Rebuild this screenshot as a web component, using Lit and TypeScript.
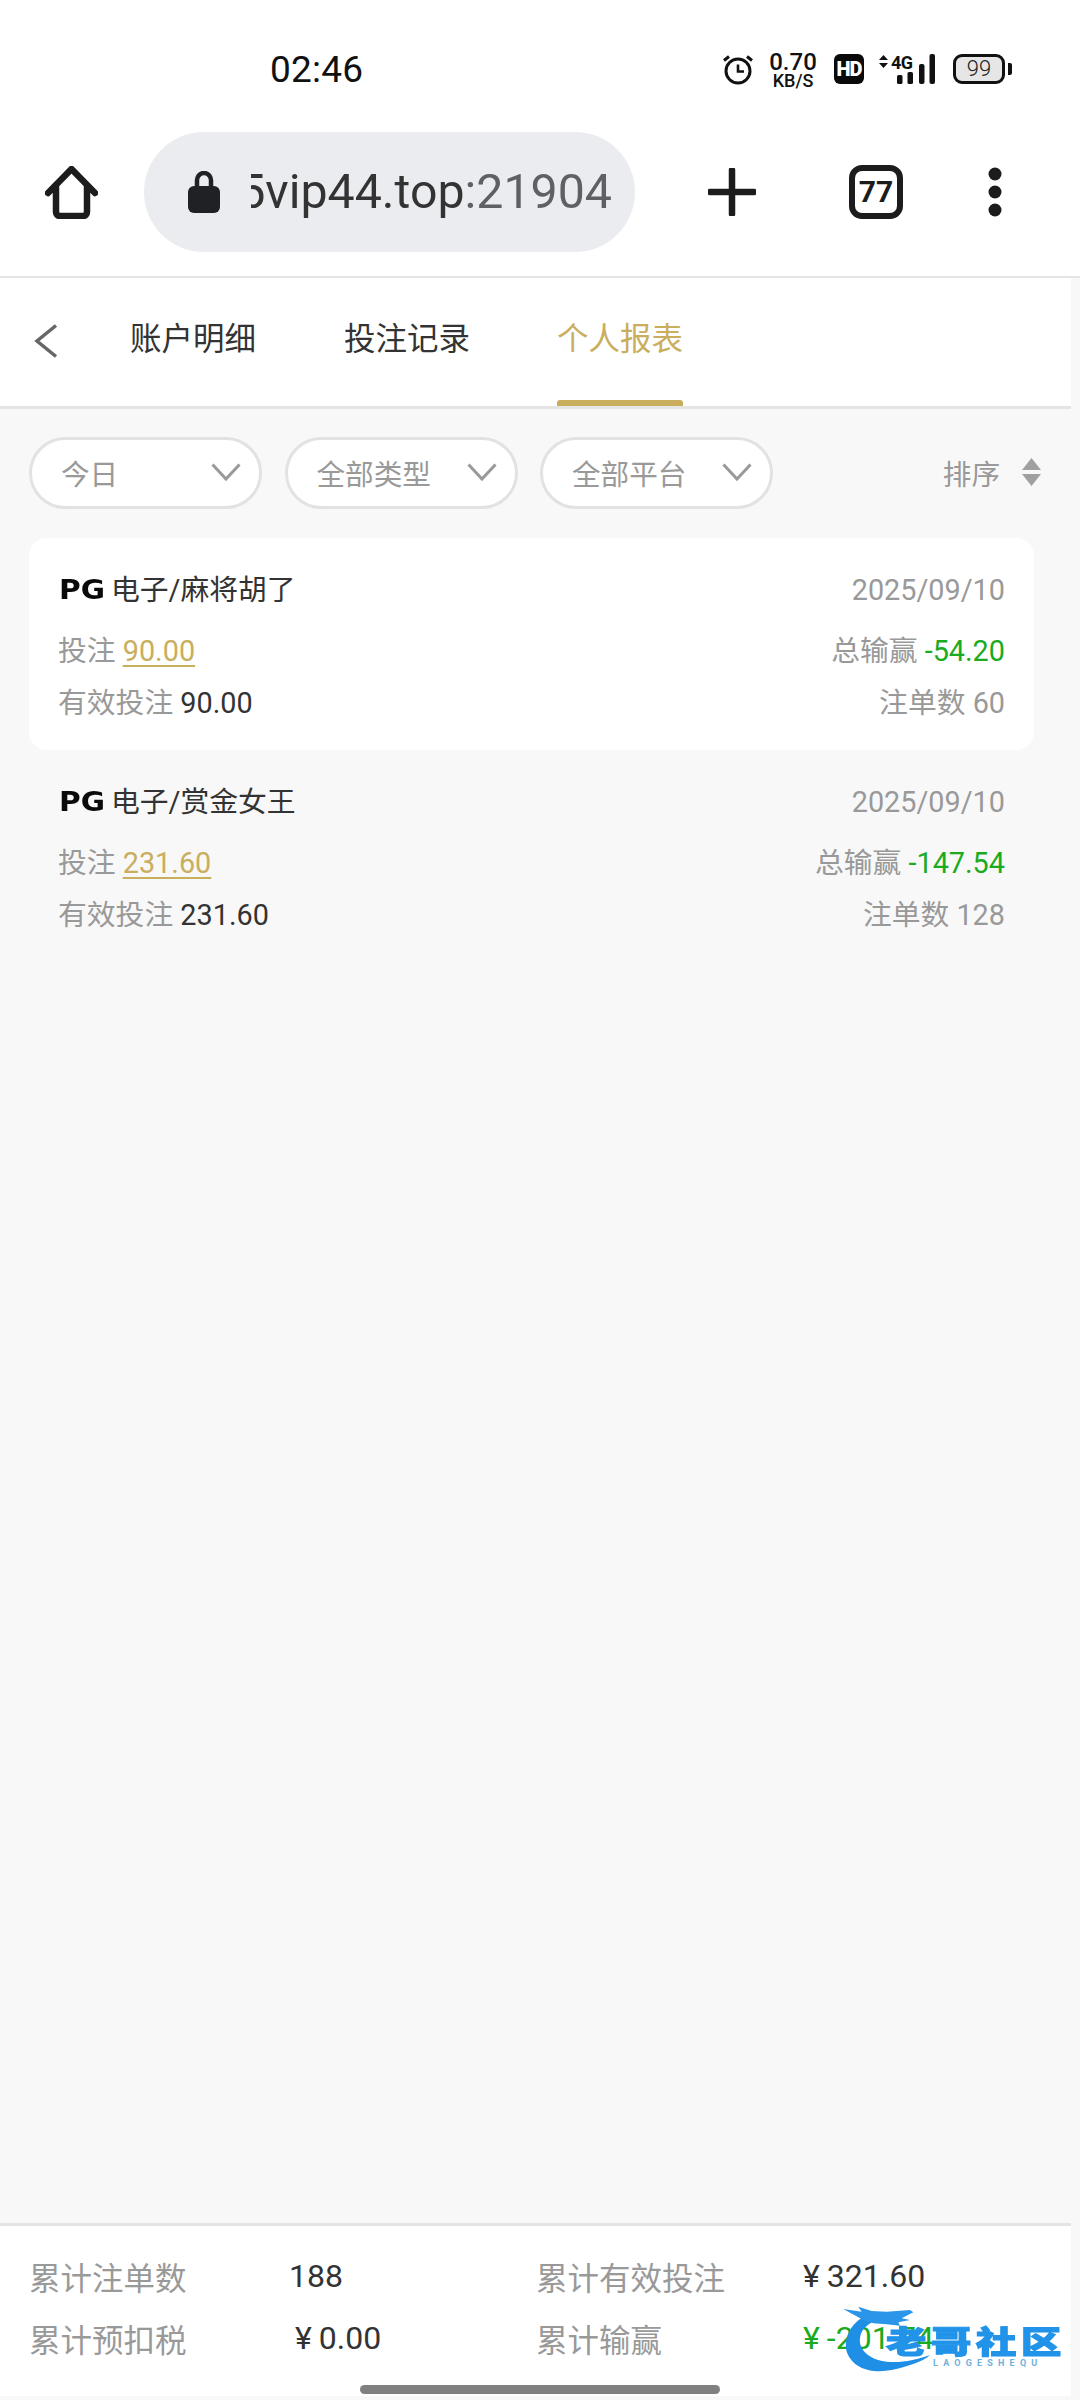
import { LitElement, html, css } from "lit";
import { customElement } from "lit/decorators.js";

const chevron = html`<svg class="chev" width="30" height="18" viewBox="0 0 30 18"><path d="M1.5 1.5 15 16 28.5 1.5" fill="none" stroke="#999" stroke-width="3"/></svg>`;

const records = [
  { game: "电子/麻将胡了", date: "2025/09/10", bet: "90.00", win: "-54.20", valid: "90.00", count: "60", active: true },
  { game: "电子/赏金女王", date: "2025/09/10", bet: "231.60", win: "-147.54", valid: "231.60", count: "128", active: false },
];

@customElement("app-root")
export class AppRoot extends LitElement {
  static styles = css`
    :host { display: block; width: 1080px; height: 2400px; overflow: hidden; }
    * { box-sizing: border-box; }
    .root { position: relative; width: 1080px; height: 2400px; display: flex; flex-direction: column; background: #f8f8f8;
      font-family: Roboto, "Noto Sans CJK SC", sans-serif; color: #333; }

    .status { height: 108px; background: #fff; display: flex; justify-content: space-between; align-items: flex-start; padding: 52px 68px 0 270px; }
    .time { font-size: 37px; line-height: 36px; color: #111; letter-spacing: .2px; }
    .sicons { display: flex; align-items: flex-start; height: 36px; }
    .speed { width: 48px; margin-left: 16px; text-align: center; color: #111; line-height: 1; font-weight: 500; }
    .speed b { display: block; font-size: 24px; line-height: 20px; font-weight: 500; }
    .speed i { display: block; font-size: 18px; line-height: 15px; font-style: normal; margin-top: 1px; }
    .hd { width: 30px; height: 30px; margin: 2px 0 0 17px; background: #0a0a0a; color: #fff; border-radius: 6px; font-size: 20px; font-weight: 900; line-height: 30px; text-align: center; letter-spacing: -1px; }
    .net { margin: 2px 0 0 15px; }
    .batt { margin: 2px 0 0 18px; position: relative; width: 59px; height: 30px; }
    .battbody { width: 52px; height: 30px; border: 3.5px solid #111; border-radius: 9px; background: #e6e6e6; font-size: 22px; font-weight: 300; line-height: 23px; text-align: center; color: #222; }
    .nub { position: absolute; right: 0; top: 9px; width: 4px; height: 12px; background: #111; border-radius: 0 2px 2px 0; }

    .toolbar { height: 168px; background: #fff; display: flex; align-items: center; }
    .home { margin-left: 45px; }
    .pill { margin-left: 46px; width: 491px; height: 120px; border-radius: 60px; background: #ebecf0; display: flex; align-items: center; padding-left: 44px; }
    .url { margin-left: 31px; width: 361px; height: 62px; overflow: hidden; display: flex; justify-content: flex-end; white-space: nowrap; font-size: 48.3px; line-height: 62px; color: #333; }
    .url span { color: #5f6063; }
    .plus { margin-left: 73px; }
    .tabs-btn { margin-left: 93px; width: 54px; height: 54px; border: 6px solid #1c1c1c; border-radius: 13px; font-size: 30px; font-weight: 700; line-height: 42px; text-align: center; color: #1c1c1c; }
    .dots { margin-left: 85px; }

    .topline { height: 2px; background: #e4e4e4; }
    .page { flex: 1; width: 1071px; display: flex; flex-direction: column; min-height: 0; }
    .tabs { flex: none; background: #fff; border-bottom: 3px solid #e4e4e4; display: flex; align-items: stretch; padding-left: 34px; height: 131px; }
    .back { margin-top: 46px; }
    .tab { font-size: 31.5px; color: #333; line-height: 44px; padding-top: 40px; position: relative; width: 126px; white-space: nowrap; }
    .tab.first { margin-left: 72px; }
    .tab + .tab { margin-left: 88px; }
    .tab.on { color: #c9ae5e; margin-left: 87px; }
    .tab.on::after { content: ""; position: absolute; left: 0; right: 0; bottom: 0; height: 6px; border-radius: 3px 3px 0 0; background: #c9ae5e; }

    .filters { height: 129px; flex: none; display: flex; align-items: flex-start; padding: 28px 0 0 29px; }
    .sel { width: 233px; height: 72px; border: 3px solid #e2e2e2; border-radius: 36px; background: #fff; display: flex; align-items: center; justify-content: space-between; padding: 0 18px 2px 29px; font-size: 28.6px; color: #999; margin-right: 22.5px; }
    .sort { margin-left: auto; height: 70px; display: flex; align-items: center; font-size: 28.6px; color: #999; padding-right: 29px; }
    .sort svg { margin-left: 21px; }

    .card { margin-left: 29px; width: 1005px; height: 212px; flex: none; border-radius: 18px; padding: 32px 29px 0; font-size: 28.8px; line-height: 40px; color: #999; }
    .card.on { background: #fff; }
    .row { display: flex; justify-content: space-between; white-space: nowrap; }
    .row.r2 { margin-top: 21px; }
    .row.r3 { margin-top: 12px; }
    .title { display: flex; align-items: center; color: #333; }
    .pg { font-family: "DejaVu Sans", sans-serif; font-weight: 700; font-size: 26px; color: #0a0a0a; width: 52px; margin-left: 1px; line-height: 40px; transform: scaleX(1.14); transform-origin: left center; }
    .gold { color: #c9ae5e; text-decoration: underline; text-underline-offset: 4px; text-decoration-thickness: 2px; }
    .green { color: #1aab1f; }
    .dark { color: #333; }

    .spacer { flex: 1; }
    .sum { flex: none; height: 173px; background: #fff; border-top: 3px solid #e4e4e4; margin-bottom: 4px; padding: 19px 0 0 29px; display: grid; grid-template-columns: 260px 247px 267px 1fr; grid-auto-rows: 62px; align-items: center; font-size: 31.5px; color: #999; white-space: nowrap; }
    .val { font-size: 32px; color: #333; }
    .val.shift { padding-left: 6px; }
    .val.green { color: #1aab1f; }
    .yen { margin-right: 7px; }

    .indicator { position: absolute; left: 360px; top: 2385px; width: 360px; height: 9px; border-radius: 5px; background: #808080; }

    .mark { position: absolute; left: 840px; top: 2303px; width: 226px; height: 74px; }
    .mark svg { position: absolute; left: 0; top: 0; filter: blur(.5px); }
    .mark .cn { position: absolute; left: 46px; top: 21px; display: flex; gap: 5px; filter: blur(.5px); font-family: "Noto Sans CJK SC", sans-serif; }
    .mark .cn span { display: block; width: 40px; font-size: 31px; line-height: 32px; font-weight: 900; white-space: nowrap; color: #2193e8; -webkit-text-stroke: 1.2px #2193e8; transform: scaleX(1.3); transform-origin: left center; }
    .mark .en { position: absolute; left: 93px; top: 55px; font-size: 9px; line-height: 10px; letter-spacing: 5.2px; color: #6fb0de; font-weight: 700; white-space: nowrap; }
  `;

  render() {
    return html`<div class="root">
      <div class="status">
        <div class="time">02:46</div>
        <div class="sicons">
          <svg width="30" height="31" viewBox="0 0 30 31" style="margin-top:2px" fill="none" stroke="#111">
            <circle cx="15" cy="17" r="12" stroke-width="3"/>
            <path d="M15 10.5V17.5H21" stroke-width="2.6"/>
            <path d="M1 6.5 6 2.5M29 6.5 24 2.5" stroke-width="3"/>
          </svg>
          <div class="speed"><b>0.70</b><i>KB/S</i></div>
          <div class="hd">HD</div>
          <svg class="net" width="56" height="30" viewBox="0 0 56 30">
            <path d="M4.500 1 9 6H0ZM4.500 14 0 9H9Z" fill="#111"/>
            <text x="12" y="15" font-family="Roboto" font-size="18" font-weight="700" fill="#111" textLength="22">4G</text>
            <rect x="18" y="21" width="5.500" height="9" rx="1.500" fill="#111"/>
            <rect x="28.500" y="18" width="5.500" height="12" rx="1.500" fill="#111"/>
            <rect x="40" y="10" width="5.500" height="20" rx="2" fill="#111"/>
            <rect x="50.500" y="0" width="5.500" height="30" rx="2" fill="#111"/>
          </svg>
          <div class="batt"><div class="battbody">99</div><div class="nub"></div></div>
        </div>
      </div>

      <div class="toolbar">
        <svg class="home" width="53" height="53" viewBox="0 0 53 53" fill="none" stroke="#1c1c1c" stroke-width="6.500" stroke-linejoin="round" stroke-linecap="round">
          <path d="M3 27 26.500 3 50 27M11 19V46a4 4 0 0 0 4 4H38a4 4 0 0 0 4-4V19"/>
        </svg>
        <div class="pill">
          <svg width="32" height="42" viewBox="0 0 32 42">
            <path d="M9 18V9a7 7 0 0 1 14 0V18" fill="none" stroke="#202124" stroke-width="4.500"/>
            <rect x="0" y="15" width="32" height="27" rx="6" fill="#202124"/>
          </svg>
          <div class="url">5vip44.top<span>:21904</span></div>
        </div>
        <svg class="plus" width="48" height="48" viewBox="0 0 48 48"><path d="M24 2V46M2 24H46" stroke="#1c1c1c" stroke-width="6.500" stroke-linecap="round"/></svg>
        <div class="tabs-btn">77</div>
        <svg class="dots" width="14" height="50" viewBox="0 0 14 50" fill="#1c1c1c"><circle cx="7" cy="7" r="6.500"/><circle cx="7" cy="25" r="6.500"/><circle cx="7" cy="43" r="6.500"/></svg>
      </div>
      <div class="topline"></div>

      <div class="page">
        <div class="tabs">
          <svg class="back" width="24" height="34" viewBox="0 0 24 34"><path d="M22 1.500 3 17 22 32.500" fill="none" stroke="#666" stroke-width="3.500"/></svg>
          <div class="tab first">账户明细</div>
          <div class="tab">投注记录</div>
          <div class="tab on">个人报表</div>
        </div>
        <div class="filters">
          <div class="sel">今日${chevron}</div>
          <div class="sel">全部类型${chevron}</div>
          <div class="sel">全部平台${chevron}</div>
          <div class="sort">排序<svg width="21" height="28" viewBox="0 0 21 28" fill="#a0a0a0"><path d="M10.500 0 20 12H1ZM1 16H20L10.500 28Z"/></svg></div>
        </div>
        ${records.map(
          (r) => html`<div class="card ${r.active ? "on" : ""}">
            <div class="row">
              <div class="title"><span class="pg">PG</span>${r.game}</div>
              <div>${r.date}</div>
            </div>
            <div class="row r2">
              <div>投注 <span class="gold">${r.bet}</span></div>
              <div>总输赢 <span class="green">${r.win}</span></div>
            </div>
            <div class="row r3">
              <div>有效投注 <span class="dark">${r.valid}</span></div>
              <div>注单数 ${r.count}</div>
            </div>
          </div>`
        )}
        <div class="spacer"></div>
        <div class="sum">
          <div>累计注单数</div><div class="val">188</div>
          <div>累计有效投注</div><div class="val"><span class="yen">¥</span>321.60</div>
          <div>累计预扣税</div><div class="val shift"><span class="yen">¥</span>0.00</div>
          <div>累计输赢</div><div class="val green"><span class="yen">¥</span>-201.74</div>
        </div>
      </div>

      <div class="indicator"></div>
      <div class="mark">
        <svg width="226" height="74" viewBox="30 24 678 222">
          <path d="M110 60C60 85 40 130 50 170 70 225 130 235 185 225 230 215 280 200 300 180 260 195 210 205 170 200 120 195 85 165 90 130 92 105 110 90 130 80Z" fill="#1f8fe6"/>
          <path d="M40 42 95 50 85 35 125 48 170 50 240 45 250 52 215 70 240 75 205 82 210 92 170 88 130 85 100 75Z" fill="#2b95ea"/>
        </svg>
        <div class="cn"><span>老</span><span>哥</span><span>社</span><span>区</span></div>
        <div class="en">LAOGESHEQU</div>
      </div>
    </div>`;
  }
}
